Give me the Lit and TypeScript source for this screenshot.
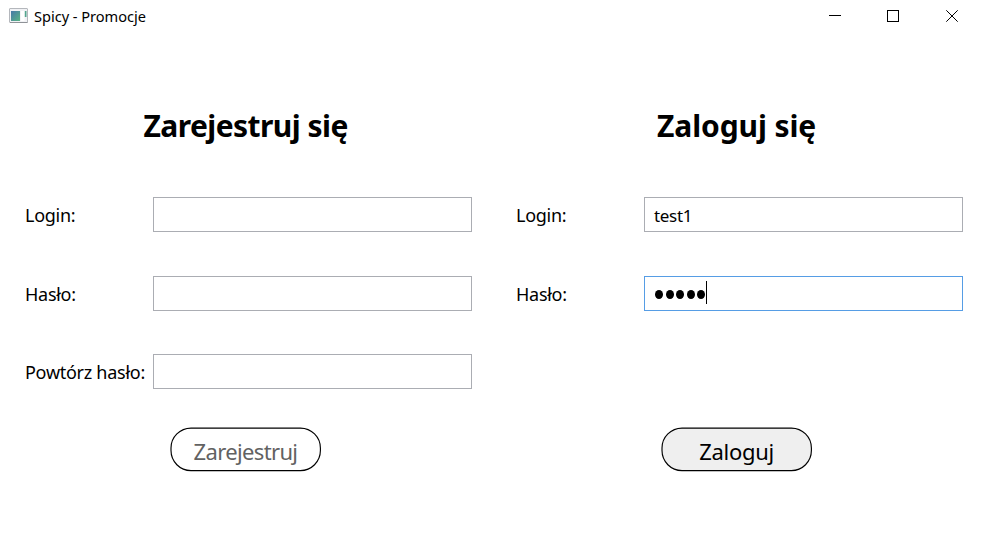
import { LitElement, html, css, nothing } from "lit";
import { customElement } from "lit/decorators.js";

@customElement("pill-button")
export class PillButton extends LitElement {
  static properties = { label: {}, filled: { type: Boolean, reflect: true } };
  declare label: string;
  declare filled: boolean;
  static styles = css`
    :host { display: block; width: 151px; height: 45px; }
    .button { display: grid; width: 151px; height: 45px; padding: 0; border: 0; background: none; font: inherit; font-size: 22px; line-height: 32px; letter-spacing: -0.65px; color: #626262; }
    .shape, .label { grid-area: 1 / 1; }
    .shape { fill: #fff; stroke: #000; stroke-width: 1.15; }
    .label { place-self: center; padding-top: 2px; white-space: nowrap; }
    :host([filled]) .shape { fill: #efefef; }
    :host([filled]) .button { color: #000; letter-spacing: -0.3px; }
  `;
  render() {
    return html`<button class="button">
      <svg class="shape" width="151" height="45" viewBox="0 0 151 45"><rect x="1" y="1.1" width="149.4" height="42.5" rx="20" /></svg>
      <span class="label">${this.label}</span>
    </button>`;
  }
}

interface Field { label: string; value?: string; dots?: number; }

@customElement("app-root")
export class AppRoot extends LitElement {
  static styles = css`
    :host { display: block; width: 981px; height: 550px; background: #fff; font-family: "Noto Sans", "Open Sans", sans-serif; color: #000; overflow: hidden; }
    .titlebar { display: flex; align-items: center; height: 32px; padding-left: 9px; }
    .title { margin-left: 5px; font-size: 14.6px; line-height: 20px; letter-spacing: -0.03px; flex: 1; padding-bottom: 1px; }
    .controls { display: flex; width: 175px; height: 32px; }
    .controls svg { width: 58px; height: 32px; fill: none; stroke: #000; flex: none; }
    .forms { display: grid; grid-template-columns: 491px 490px; }
    .form { display: flex; flex-direction: column; }
    .heading { margin: 73px 0 0; height: 42px; width: 491px; text-align: center; font-size: 30px; line-height: 42px; font-weight: 700; letter-spacing: -0.55px; }
    .login .heading { letter-spacing: -0.1px; }
    .rows { display: flex; flex-direction: column; gap: 43.5px; margin-top: 50px; height: 192px; }
    .row { display: flex; height: 35px; padding-left: 25px; }
    .label { width: 128px; font-size: 18px; line-height: 37px; letter-spacing: -0.27px; white-space: nowrap; }
    .field { box-sizing: border-box; width: 319px; height: 35px; border: 1px solid #abadb3; display: flex; align-items: center; padding-left: 9px; font-size: 17px; }
    .focused { border-color: #569de5; }
    .value { line-height: 24px; padding-top: 2px; letter-spacing: -0.3px; }
    .dots { display: flex; gap: 2.6px; padding: 2px 0 0 1px; }
    .dot { width: 8px; height: 9px; border-radius: 50%; background: #000; }
    .caret { width: 1px; height: 23px; margin: 0 0 1px 0.6px; background: #000; }
    .action { margin: 38px 0 0 170px; }
  `;

  private row(f: Field) {
    return html`<div class="row">
      <span class="label">${f.label}</span>
      <div class="field ${f.dots ? "focused" : ""}">
        ${f.value ? html`<span class="value">${f.value}</span>` : nothing}
        ${f.dots
          ? html`<span class="dots">${Array.from({ length: f.dots }, () => html`<i class="dot"></i>`)}</span><i class="caret"></i>`
          : nothing}
      </div>
    </div>`;
  }

  private form(kind: string, title: string, fields: Field[], action: string) {
    return html`<section class="form ${kind}">
      <h1 class="heading">${title}</h1>
      <div class="rows">${fields.map((f) => this.row(f))}</div>
      <pill-button class="action" .label=${action} ?filled=${kind === "login"}></pill-button>
    </section>`;
  }

  render() {
    return html`
      <header class="titlebar">
        <svg width="20" height="16" viewBox="0 0 20 16">
          <defs>
            <linearGradient id="pane" x1="0" y1="0" x2="1" y2="1"><stop offset="0" stop-color="#4778a8" /><stop offset="1" stop-color="#59b584" /></linearGradient>
          </defs>
          <rect x="0.5" y="0.5" width="18" height="14" rx="0.5" fill="#f1f2f5" stroke="#b4b7bc" />
          <path d="M1 14.5H18.5" stroke="#8f9297" />
          <rect x="2" y="3" width="9" height="10" fill="url(#pane)" />
          <rect x="12" y="3" width="3.5" height="10" fill="#fff" />
          <rect x="15.8" y="3" width="1.7" height="6" fill="#55a58e" />
        </svg>
        <span class="title">Spicy - Promocje</span>
        <div class="controls">
          <svg viewBox="0 0 58 32"><path d="M23 15.5h12" /></svg>
          <svg viewBox="0 0 58 32"><rect x="23.5" y="10.5" width="11" height="11" /></svg>
          <svg viewBox="0 0 58 32"><path d="M24.3 10.3l11.4 11.4M35.7 10.3L24.3 21.7" /></svg>
        </div>
      </header>
      <main class="forms">
        ${this.form("register", "Zarejestruj się", [{ label: "Login:" }, { label: "Hasło:" }, { label: "Powtórz hasło:" }], "Zarejestruj")}
        ${this.form("login", "Zaloguj się", [{ label: "Login:", value: "test1" }, { label: "Hasło:", dots: 5 }], "Zaloguj")}
      </main>
    `;
  }
}
